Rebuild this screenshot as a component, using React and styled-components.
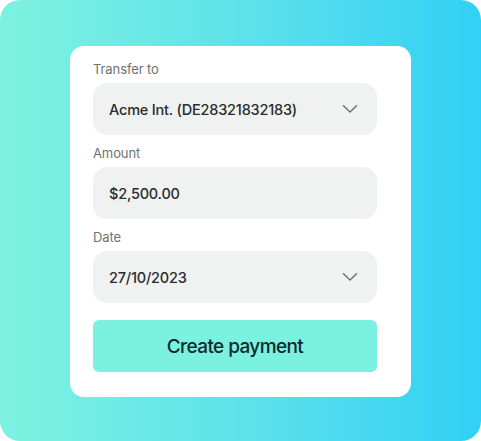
import React from "react";
import styled, { createGlobalStyle } from "styled-components";

const GlobalStyle = createGlobalStyle`
  html, body {
    margin: 0;
    padding: 0;
    background: #ffffff;
  }
  body {
    font-family: Inter, "Noto Sans", sans-serif;
  }
`;

//  Styles
const Backdrop = styled.div`
  width: 481px;
  height: 441px;
  box-sizing: border-box;
  border-radius: 20px;
  background: linear-gradient(90deg, #7ef2e1 0%, #5ee2e9 50%, #32d0f6 100%);
  display: flex;
  align-items: flex-start;
  justify-content: center;
  padding-top: 46px;
`;

const Card = styled.form`
  width: 341px;
  box-sizing: border-box;
  background: #ffffff;
  border-radius: 14px;
  padding: 14px 34px 25px 23px;
  display: flex;
  flex-direction: column;
`;

const Label = styled.label`
  font-size: 13px;
  color: #6f7173;
  letter-spacing: -0.1px;
  line-height: 18px;
  margin: ${(p) => (p.first ? "0" : "9px")} 0 5px 0;
`;

const Field = styled.div`
  height: 52px;
  border-radius: 14px;
  background: #f0f1f1;
  display: flex;
  align-items: center;
  justify-content: space-between;
  padding: 0 19px 0 16px;
`;

const Value = styled.span`
  font-size: 14.5px;
  font-weight: 500;
  color: #2a2c2d;
  letter-spacing: -0.2px;
`;

const Button = styled.button`
  margin-top: 17px;
  height: 52px;
  border: none;
  border-radius: 6px;
  background: #7bf1e2;
  font-family: Inter, "Noto Sans", sans-serif;
  font-size: 19px;
  font-weight: 500;
  letter-spacing: -0.6px;
  color: #0f2a2a;
  cursor: pointer;
`;

function Chevron()
{
    return (
        <svg width="16" height="10" viewBox="0 0 16 10" fill="none">
            <path d="M1.5 1.8 L8 8 L14.5 1.8" stroke="#6a6c6e" strokeWidth="1.4" strokeLinecap="round" strokeLinejoin="round" />
        </svg>
    );
}

const fields = [
    { label: "Transfer to", value: "Acme Int. (DE28321832183)", select: true },
    { label: "Amount", value: "$2,500.00", select: false },
    { label: "Date", value: "27/10/2023", select: true }
];

export default function App()
{
    return (
        <>
            <GlobalStyle />
            <Backdrop>
                <Card onSubmit={(e) => e.preventDefault()}>
                    {
                        fields.map((f, i) => (
                            <React.Fragment key={f.label}>
                                <Label first={i === 0}>{f.label}</Label>
                                <Field>
                                    <Value>{f.value}</Value>
                                    {f.select && <Chevron />}
                                </Field>
                            </React.Fragment>
                        ))
                    }
                    <Button type="submit">Create payment</Button>
                </Card>
            </Backdrop>
        </>
    );
}
